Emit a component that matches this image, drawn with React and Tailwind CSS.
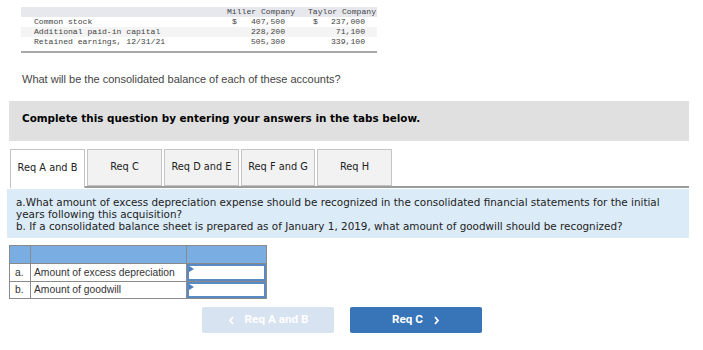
import React from "react";

const mono = { fontFamily: '"Liberation Mono", "DejaVu Sans Mono", monospace' };

function Row({ label, m, t, ms, ts, bg }) {
  return (
    <div className={`flex h-[10px] items-center ${bg}`}>
      <div className="w-[206px] pl-[13px]">{label}</div>
      <div className="w-[81px]">
        <div className="flex w-[58px] justify-between pl-[5px]">
          <span>{ms ? "$" : ""}</span>
          <span>{m}</span>
        </div>
      </div>
      <div className="w-[69px]">
        <div className="flex w-[57px] justify-between pl-[5px]">
          <span>{ts ? "$" : ""}</span>
          <span>{t}</span>
        </div>
      </div>
    </div>
  );
}

function Tab({ label, w, active }) {
  return (
    <div
      className={`flex items-center justify-center border border-[#c4c4c4] ${w} ${
        active ? "-mb-[2px] h-[39px] border-b-0 bg-white pb-[2px]" : "h-[37px] bg-[#f2f2f2]"
      }`}
    >
      {label}
    </div>
  );
}

function InputCell() {
  return (
    <div className="relative h-full w-full border-2 border-[#5a8ac4] bg-white">
      <div className="absolute left-0 top-0 h-0 w-0 border-l-[5px] border-t-[3px] border-b-[3px] border-l-[#4a7fc0] border-t-transparent border-b-transparent" />
    </div>
  );
}

export default function App() {
  return (
    <div className="h-[350px] w-[703px] bg-white text-[#333]">
      {/* top data table */}
      <div className="pt-[7px] pl-[21px]">
        <div className="w-[356px] text-[8.1px] leading-[10px] text-[#444]" style={mono}>
          <div className="flex h-[10px] items-center bg-[#e6e8ee]">
            <div className="w-[206px]" />
            <div className="w-[81px]">Miller Company</div>
            <div className="w-[69px]">Taylor Company</div>
          </div>
          <Row label="Common stock" m="407,500" t="237,000" ms ts bg="bg-white" />
          <Row label="Additional paid-in capital" m="228,200" t="71,100" bg="bg-[#f4f4f4]" />
          <Row label="Retained earnings, 12/31/21" m="505,300" t="339,100" bg="bg-white" />
          <div className="mt-[4px] h-[2px] w-[356px] bg-[#a8a8a8]" />
        </div>
      </div>

      {/* question */}
      <div
        className="mt-[20px] pl-[22px] text-[11px] leading-[13px] text-[#444]"
        style={{ fontFamily: '"Liberation Sans", Arial, sans-serif' }}
      >
        What will be the consolidated balance of each of these accounts?
      </div>

      {/* instruction box */}
      <div
        className="ml-[9px] mt-[15px] flex h-[40px] w-[680px] items-start bg-[#e0e0e0] pl-[13px] pt-[11px] text-[10.4px] font-bold leading-[12px] text-black"
        style={{ fontFamily: '"DejaVu Sans", Verdana, sans-serif' }}
      >
        Complete this question by entering your answers in the tabs below.
      </div>

      {/* tabs */}
      <div
        className="ml-[10px] mt-[8px] w-[679px] text-[9.8px] text-[#222]"
        style={{ fontFamily: '"DejaVu Sans", Verdana, sans-serif' }}
      >
        <div className="flex gap-[2px] border-b-2 border-[#9c9c9c]">
          <Tab label="Req A and B" w="w-[75px]" active />
          <Tab label="Req C" w="w-[75px]" />
          <Tab label="Req D and E" w="w-[75px]" />
          <Tab label="Req F and G" w="w-[74px]" />
          <Tab label="Req H" w="w-[75px]" />
        </div>
      </div>

      {/* blue panel */}
      <div
        className="ml-[7px] mt-[1px] w-[682px] bg-[#dcebf8] pb-[6px] pl-[9px] pt-[7px] text-[10.4px] leading-[12px] text-[#222]"
        style={{ fontFamily: '"DejaVu Sans", Verdana, sans-serif' }}
      >
        <div>
          a.What amount of excess depreciation expense should be recognized in the consolidated financial statements for the initial
          years following this acquisition?
        </div>
        <div>b. If a consolidated balance sheet is prepared as of January 1, 2019, what amount of goodwill should be recognized?</div>
      </div>

      {/* answer table */}
      <div
        className="ml-[9px] mt-[7px] w-[258px] border border-[#8a8a8a] text-[10.3px] text-[#333]"
        style={{ fontFamily: '"Liberation Sans", Arial, sans-serif' }}
      >
        <div className="flex h-[17px] bg-[#7aaee2]">
          <div className="w-[21px] border-r border-[#8a8a8a]" />
          <div className="w-[156px] border-r border-[#8a8a8a]" />
          <div className="flex-1" />
        </div>
        <div className="flex h-[18px] border-t border-[#8a8a8a]">
          <div className="flex w-[21px] items-center border-r border-[#8a8a8a] pl-[5px]">a.</div>
          <div className="flex w-[156px] items-center border-r border-[#8a8a8a] pl-[3px]">Amount of excess depreciation</div>
          <div className="flex-1">
            <InputCell />
          </div>
        </div>
        <div className="flex h-[17px] border-t border-[#8a8a8a]">
          <div className="flex w-[21px] items-center border-r border-[#8a8a8a] pl-[5px]">b.</div>
          <div className="flex w-[156px] items-center border-r border-[#8a8a8a] pl-[3px]">Amount of goodwill</div>
          <div className="flex-1">
            <InputCell />
          </div>
        </div>
      </div>

      {/* buttons */}
      <div
        className="ml-[202px] mt-[8px] flex gap-[16px] text-[11.7px] font-bold text-white"
        style={{ fontFamily: 'Roboto, "Liberation Sans", sans-serif' }}
      >
        <div className="flex h-[26px] w-[132px] items-center justify-center gap-[10px] rounded-[2px] bg-[#d7e3f1]">
          <svg width="7" height="9" viewBox="0 0 7 9"><path d="M5 1 L2 4.5 L5 8" stroke="white" strokeWidth="1.8" fill="none" /></svg>
          <span>Req A and B</span>
        </div>
        <div className="flex h-[26px] w-[132px] items-center justify-center gap-[10px] rounded-[2px] bg-[#3874b8]">
          <span>Req C</span>
          <svg width="7" height="9" viewBox="0 0 7 9"><path d="M2 1 L5 4.5 L2 8" stroke="white" strokeWidth="1.8" fill="none" /></svg>
        </div>
      </div>
    </div>
  );
}
